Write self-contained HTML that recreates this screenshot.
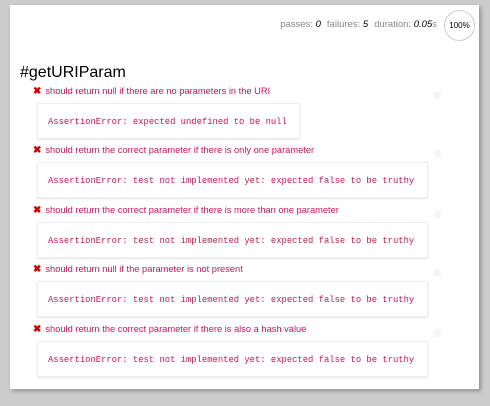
<!DOCTYPE html>
<html><head><style>
body{margin:0;width:490px;height:406px;background:#ccc;font-family:"Liberation Sans",Arial,sans-serif;overflow:hidden;position:relative}
.panel{position:absolute;left:10px;top:5px;width:469px;height:384px;background:#fff;box-shadow:2px 2px 4px rgba(0,0,0,.3)}
.stats{position:absolute;top:19px;right:53px;font-size:9.5px;color:#888;white-space:nowrap}
.stats em{color:#000;font-style:italic}
.stats span{margin-left:6px}
.circle{position:absolute;left:444px;top:10px;width:29px;height:29px;border:1px solid #ccc;border-radius:50%;font-size:8px;text-align:center;line-height:29px;color:#000}
h1{position:absolute;left:20px;top:64px;margin:0;font-size:16px;font-weight:normal;color:#000}
.t{position:absolute;left:33px;font-size:9.3px;color:#c2185b;white-space:nowrap}
.t b{font-size:10px;margin-right:4px;color:#c00}
.dot{position:absolute;left:433px;width:8px;height:8px;border-radius:50%;background:#f5f5f5}
.e{position:absolute;left:37px;height:36px;background:#fff;border:1px solid #eee;box-shadow:0 1px 2px rgba(0,0,0,.1);font-family:"Liberation Mono",monospace;font-size:8.85px;color:#c2185b;line-height:36px;padding-left:10px;box-sizing:border-box}
</style></head><body>
<div class="panel"></div>
<div class="stats">passes: <em>0</em><span>failures: <em>5</em></span><span>duration: <em>0.05</em>s</span></div>
<div class="circle">100%</div>
<h1>#getURIParam</h1>

<div class="t" style="top:86px"><b>✖</b>should return null if there are no parameters in the URI</div>
<div class="dot" style="top:91px"></div>
<div class="e" style="top:103px;width:263px">AssertionError: expected undefined to be null</div>

<div class="t" style="top:145px"><b>✖</b>should return the correct parameter if there is only one parameter</div>
<div class="dot" style="top:150px"></div>
<div class="e" style="top:162px;width:391px">AssertionError: test not implemented yet: expected false to be truthy</div>

<div class="t" style="top:205px"><b>✖</b>should return the correct parameter if there is more than one parameter</div>
<div class="dot" style="top:210px"></div>
<div class="e" style="top:222px;width:391px">AssertionError: test not implemented yet: expected false to be truthy</div>

<div class="t" style="top:264px"><b>✖</b>should return null if the parameter is not present</div>
<div class="dot" style="top:269px"></div>
<div class="e" style="top:281px;width:391px">AssertionError: test not implemented yet: expected false to be truthy</div>

<div class="t" style="top:324px"><b>✖</b>should return the correct parameter if there is also a hash value</div>
<div class="dot" style="top:329px"></div>
<div class="e" style="top:341px;width:391px">AssertionError: test not implemented yet: expected false to be truthy</div>
</body></html>
